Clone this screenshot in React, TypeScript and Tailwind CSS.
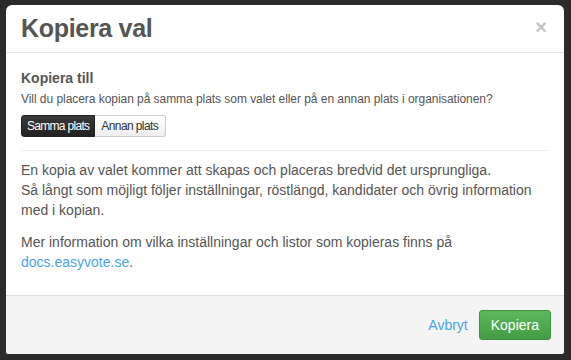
import React from "react";

export default function App() {
  return (
    <div className="w-[571px] h-[360px] bg-[#2b2b2b] pt-[5px] pl-[6px] overflow-hidden" style={{ fontFamily: '"Liberation Sans", Arial, sans-serif' }}>
      <div className="w-[558px] h-[349px] bg-white rounded-t-[6px] rounded-b-[3px] flex flex-col overflow-hidden">
        <div className="h-[48px] border-b border-[#e5e5e5] flex items-center justify-between pl-[15px] pr-[17px]">
          <h1 className="text-[25px] font-bold text-[#555555] leading-none tracking-[-0.3px]">Kopiera val</h1>
          <span className="text-[#c4c4c4] text-[20px] font-bold leading-none -mt-[3px]">×</span>
        </div>
        <div className="flex-1 px-[15px] pt-[16px]">
          <div className="text-[14px] font-bold text-[#555555] leading-[18px]">Kopiera till</div>
          <div className="text-[12px] text-[#555555] leading-[16px] mt-[4px] tracking-[-0.05px]">Vill du placera kopian på samma plats som valet eller på en annan plats i organisationen?</div>
          <div className="flex mt-[8px]">
            <div className="h-[22px] px-[5px] flex items-center text-[12px] text-white bg-gradient-to-b from-[#3a3a3a] to-[#222222] rounded-l-[3px] border border-[#222222] tracking-[-0.7px]">Samma plats</div>
            <div className="h-[22px] pl-[6px] pr-[7px] flex items-center text-[12px] text-[#333333] bg-gradient-to-b from-white to-[#eeeeee] rounded-r-[3px] border border-l-0 border-[#cccccc] tracking-[-0.6px]">Annan plats</div>
          </div>
          <div className="border-t border-[#eeeeee] mt-[13px]" />
          <div className="text-[14px] text-[#555555] leading-[20px] mt-[9px]">
            En kopia av valet kommer att skapas och placeras bredvid det ursprungliga.
            <br />
            Så långt som möjligt följer inställningar, röstlängd, kandidater och övrig information med i kopian.
          </div>
          <div className="text-[14px] text-[#555555] leading-[20px] mt-[12px]">
            Mer information om vilka inställningar och listor som kopieras finns på <span className="text-[#4ba3e8]">docs.easyvote.se</span>.
          </div>
        </div>
        <div className="h-[59px] bg-[#f4f4f4] border-t border-[#dddddd] flex items-center justify-end gap-[11px] pr-[13px]">
          <span className="text-[#4ba3e8] text-[14px]">Avbryt</span>
          <div className="h-[30px] px-[11px] flex items-center rounded-[3px] bg-gradient-to-b from-[#5cb85c] to-[#449d44] border border-[#3e8f3e] text-white text-[14px]">Kopiera</div>
        </div>
      </div>
    </div>
  );
}
